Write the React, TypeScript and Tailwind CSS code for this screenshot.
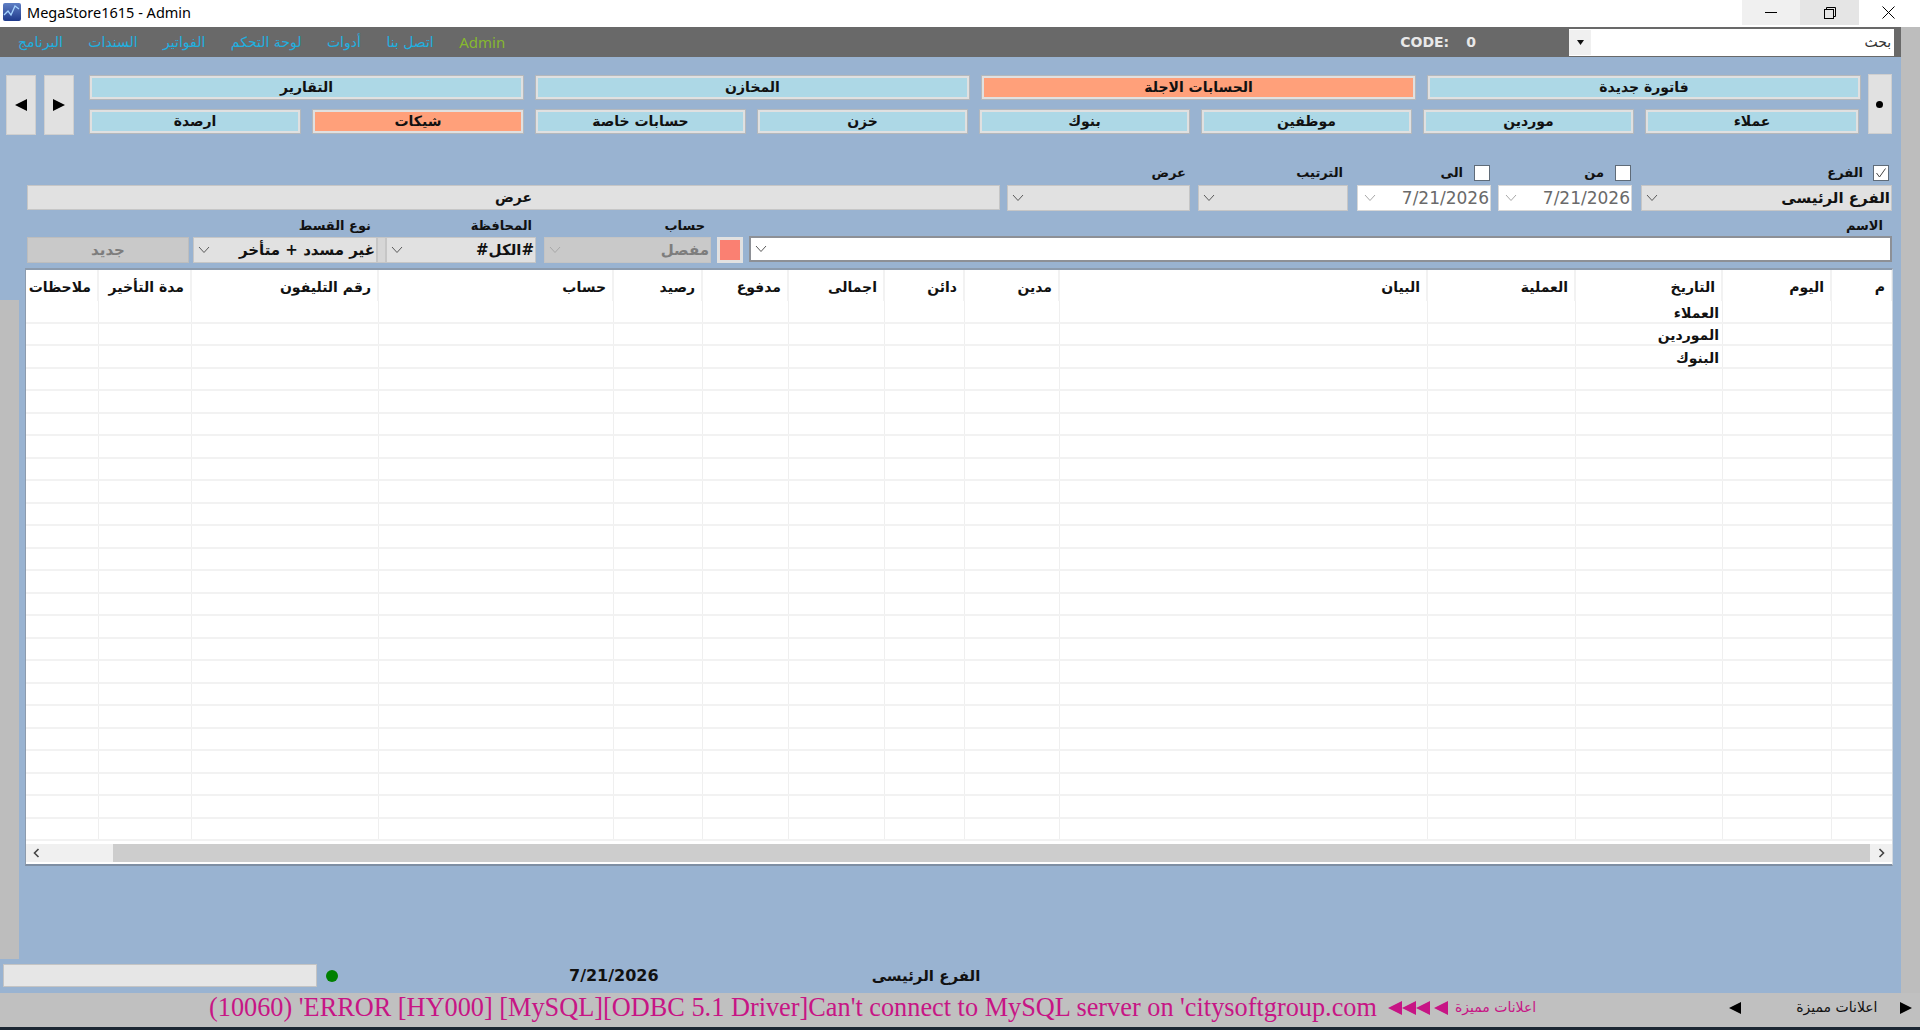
import React from "react";

const AR = "font-['DejaVu_Sans',sans-serif]";

function Chevron({ disabled = false }: { disabled?: boolean }) {
  return (
    <svg width="12" height="8" viewBox="0 0 12 8" className="shrink-0">
      <polyline points="1,1 6,6.5 11,1" fill="none" stroke={disabled ? "#a8a8a8" : "#5a5a5a"} strokeWidth="1" />
    </svg>
  );
}

function Tri({ dir, size = 12, color = "#000" }: { dir: "l" | "r"; size?: number; color?: string }) {
  return (
    <svg width={size} height={size} viewBox="0 0 10 10" className="shrink-0">
      <polygon points={dir === "l" ? "0,5 10,0 10,10" : "0,0 10,5 0,10"} fill={color} />
    </svg>
  );
}

function Btn({ w, label, active = false }: { w: string; label: string; active?: boolean }) {
  return (
    <button className={`${w} h-[25px] shrink-0 border border-[#b4b8bc] p-0 flex`}>
      <span
        dir="rtl"
        className={`flex-1 border-2 border-[#e0e0e0] flex items-center justify-center text-[14px] font-bold text-[#111] ${AR} ${
          active ? "bg-[#ffa07a]" : "bg-[#add8e6]"
        }`}
      >
        {label}
      </span>
    </button>
  );
}

function Combo({
  w,
  text,
  white = false,
  disabled = false,
  thick = false,
}: {
  w: string;
  text?: string;
  white?: boolean;
  disabled?: boolean;
  thick?: boolean;
}) {
  return (
    <div
      className={`${w} h-[26px] shrink-0 flex items-center justify-between pl-[4px] pr-[1px] text-[15px] font-bold ${AR} border ${
        thick
          ? "border-[#8d9096] border-2 bg-white"
          : white
          ? "border-[#d4d4d4] bg-white"
          : disabled
          ? "border-[#c4c4c4] bg-[#c9c9c9] text-[#7d7d7d]"
          : "border-[#c6c6c6] bg-[#e1e1e1] text-[#111]"
      }`}
    >
      <Chevron disabled={disabled} />
      <span dir="rtl" className="pt-[1px]">{text}</span>
    </div>
  );
}

function DateBox({ w }: { w: string }) {
  return (
    <div className={`${w} h-[26px] shrink-0 flex items-center justify-between pl-[6px] pr-[1px] bg-white border border-[#d8d8d8] text-[17px] text-[#6a6a6a] font-['DejaVu_Sans',sans-serif]`}>
      <Chevron disabled />
      <span className="pt-[2px]">7/21/2026</span>
    </div>
  );
}

function Check({ checked = false }: { checked?: boolean }) {
  return (
    <div className="w-[16px] h-[16px] shrink-0 bg-white border border-[#5f6b78] flex items-center justify-center">
      {checked && (
        <svg width="12" height="12" viewBox="0 0 12 12">
          <polyline points="1.5,6 4.5,10 10.5,1.5" fill="none" stroke="#444" strokeWidth="1" />
        </svg>
      )}
    </div>
  );
}

const cols = [
  { w: "w-[73px]", t: "ملاحظات" },
  { w: "w-[93px]", t: "مدة التأخير" },
  { w: "w-[187px]", t: "رقم التليفون" },
  { w: "w-[235px]", t: "حساب" },
  { w: "w-[89px]", t: "رصيد" },
  { w: "w-[86px]", t: "مدفوع" },
  { w: "w-[96px]", t: "اجمالى" },
  { w: "w-[80px]", t: "دائن" },
  { w: "w-[95px]", t: "مدين" },
  { w: "w-[368px]", t: "البيان" },
  { w: "w-[148px]", t: "العملية" },
  { w: "w-[147px]", t: "التاريخ" },
  { w: "w-[109px]", t: "اليوم" },
  { w: "w-[61px]", t: "م" },
];

const rowTexts: Record<number, string> = { 0: "العملاء", 1: "الموردين", 2: "البنوك" };
const rows = Array.from({ length: 24 }, (_, i) => i);

function Table() {
  return (
    <div className="w-[1868px] h-[598px] shrink-0 bg-white border-t-2 border-l border-r border-b-2 border-t-[#8c9bad] border-l-[#8c9bad] border-r-[#d0d8e0] border-b-[#7f8fa3] flex flex-col overflow-hidden">
      <div className="h-[31px] shrink-0 flex">
        {cols.map((c) => (
          <div
            key={c.t}
            className={`${c.w} shrink-0 border-r-2 border-[#f2f2f2] flex items-center justify-end pr-[6px] pt-[4px] text-[14px] font-bold text-[#111] ${AR}`}
          >
            <span dir="rtl">{c.t}</span>
          </div>
        ))}
      </div>
      <div className="flex-1 overflow-hidden">
        {rows.map((r) => (
          <div key={r} className="h-[22.5px] flex border-b-2 border-[#f2f2f2]">
            {cols.map((c, i) => (
              <div
                key={c.t}
                className={`${c.w} shrink-0 border-r border-[#efefef] flex items-center justify-end pr-[3px] pt-[4px] text-[14px] font-bold text-[#111] ${AR}`}
              >
                {i === 11 && rowTexts[r] ? <span dir="rtl">{rowTexts[r]}</span> : null}
              </div>
            ))}
          </div>
        ))}
      </div>
      <div className="h-[23px] shrink-0 bg-white pt-[3px] pb-[2px] flex">
        <div className="w-[87px] shrink-0 bg-[#f0f0f0] flex items-center pl-[7px]">
          <svg width="7" height="10" viewBox="0 0 7 10">
            <polyline points="5.5,1 1.5,5 5.5,9" fill="none" stroke="#444" strokeWidth="1.6" />
          </svg>
        </div>
        <div className="flex-1 bg-[#cdcdcd]" />
        <div className="w-[22px] shrink-0 bg-[#f0f0f0] flex items-center justify-center">
          <svg width="7" height="10" viewBox="0 0 7 10">
            <polyline points="1.5,1 5.5,5 1.5,9" fill="none" stroke="#444" strokeWidth="1.6" />
          </svg>
        </div>
      </div>
    </div>
  );
}

export default function App() {
  return (
    <div className="w-[1920px] h-[1030px] flex flex-col overflow-hidden bg-[#99b3d1]">
      {/* Title bar */}
      <div className="h-[27px] shrink-0 bg-white flex items-start">
        <div className="w-[18px] h-[18px] ml-[3px] mt-[3px] shrink-0">
          <svg width="18" height="18" viewBox="0 0 18 18">
            <defs>
              <linearGradient id="lg" x1="0" y1="0" x2="0" y2="1">
                <stop offset="0" stopColor="#5f7fc4" />
                <stop offset="1" stopColor="#1f3a8c" />
              </linearGradient>
            </defs>
            <rect x="0" y="0" width="18" height="18" rx="2" fill="url(#lg)" />
            <polyline points="1,12 5,8 8,12 12,3 16,6" fill="none" stroke="#a6d4ff" strokeWidth="1.3" />
          </svg>
        </div>
        <span className="ml-[6px] mt-[2px] text-[14.5px] leading-[20px] text-black font-['Noto_Sans',sans-serif]">MegaStore1615 - Admin</span>
        <div className="ml-auto flex">
          <div className="w-[58px] h-[25px] bg-[#f0f0f0] flex items-center justify-center">
            <div className="w-[12px] h-[1px] bg-black" />
          </div>
          <div className="w-[59px] h-[25px] bg-[#e5e5e5] flex items-center justify-center">
            <svg width="12" height="12" viewBox="0 0 12 12">
              <rect x="0.5" y="2.5" width="9" height="9" fill="none" stroke="#000" />
              <polyline points="2.5,2.5 2.5,0.5 11.5,0.5 11.5,9.5 9.5,9.5" fill="none" stroke="#000" />
            </svg>
          </div>
          <div className="w-[61px] h-[25px] bg-white flex items-center justify-center pr-[3px]">
            <svg width="13" height="13" viewBox="0 0 13 13">
              <path d="M0.5 0.5 L12.5 12.5 M12.5 0.5 L0.5 12.5" stroke="#000" strokeWidth="1" fill="none" />
            </svg>
          </div>
        </div>
      </div>

      <div className="h-[966px] shrink-0 flex">
        <div className="w-[1901px] shrink-0 flex flex-col">
          {/* Menu */}
          <div className="h-[30px] shrink-0 bg-[#696969] flex items-center">
            <div className={`ml-[18px] flex items-center gap-[25.5px] text-[14px] text-[#20b0e0] ${AR}`}>
              {["البرنامج", "السندات", "الفواتير", "لوحة التحكم", "أدوات", "اتصل بنا"].map((m) => (
                <span key={m} dir="rtl">{m}</span>
              ))}
              <span className="text-[#86b82f] font-['Noto_Sans',sans-serif] text-[15px]">Admin</span>
            </div>
            <div className="ml-[895px] w-[47px] text-[14px] font-bold text-[#e8e8e8] font-['DejaVu_Sans',sans-serif] whitespace-nowrap">CODE:</div>
            <div className="ml-[19px] w-[103px] text-[14px] font-bold text-[#e8e8e8] font-['DejaVu_Sans',sans-serif]">0</div>
            <div className="w-[325px] h-[27px] bg-white flex items-center justify-between pr-[3px]">
              <div className="w-[22px] h-[25px] bg-[#f0f0f0] flex items-center justify-center">
                <svg width="7" height="5" viewBox="0 0 7 5"><polygon points="0,0 7,0 3.5,5" fill="#111" /></svg>
              </div>
              <span dir="rtl" className={`text-[14px] text-[#333] ${AR}`}>بحث</span>
            </div>
          </div>

          {/* Nav + action buttons */}
          <div className="h-[78px] shrink-0 pt-[18px] pl-[6px] flex">
            <button className="w-[30px] h-[60px] bg-[#e1e1e1] border border-[#cfcfcf] flex items-center justify-center"><Tri dir="l" /></button>
            <button className="w-[30px] h-[60px] ml-[8px] bg-[#e1e1e1] border border-[#cfcfcf] flex items-center justify-center"><Tri dir="r" /></button>
            <div className="ml-[15px] w-[1773px] flex flex-col gap-[9px]">
              <div className="flex gap-[11px]">
                <Btn w="w-[435px]" label="التقارير" />
                <Btn w="w-[435px]" label="المخازن" />
                <Btn w="w-[435px]" label="الحسابات الاجلة" active />
                <Btn w="w-[434px]" label="فاتورة جديدة" />
              </div>
              <div className="flex gap-[11px]">
                <Btn w="w-[212px]" label="ارصدة" />
                <Btn w="w-[212px]" label="شيكات" active />
                <Btn w="w-[211px]" label="حسابات خاصة" />
                <Btn w="w-[211px]" label="خزن" />
                <Btn w="w-[211px]" label="بنوك" />
                <Btn w="w-[211px]" label="موظفين" />
                <Btn w="w-[211px]" label="موردين" />
                <Btn w="w-[214px]" label="عملاء" />
              </div>
            </div>
            <button className="ml-[6px] w-[24px] h-[60px] -mt-[1px] pr-[2px] bg-[#e1e1e1] border border-[#cfcfcf] flex items-center justify-center">
              <div className="w-[7px] h-[7px] rounded-full bg-black" />
            </button>
          </div>

          {/* Filter labels row 1 */}
          <div className={`h-[50px] shrink-0 flex items-center pt-[30px] pb-[4px] text-[13px] font-bold text-[#111] ${AR}`}>
            <span dir="rtl" className="ml-[1150px] w-[36px] text-right">عرض</span>
            <span dir="rtl" className="ml-[107px] w-[50px] text-right">الترتيب</span>
            <span dir="rtl" className="ml-[90px] w-[30px] text-right">الى</span>
            <div className="ml-[11px]"><Check /></div>
            <span dir="rtl" className="ml-[84px] w-[30px] text-right">من</span>
            <div className="ml-[11px]"><Check /></div>
            <span dir="rtl" className="ml-[192px] w-[40px] text-right">الفرع</span>
            <div className="ml-[10px]"><Check checked /></div>
          </div>

          {/* Filter row 1 */}
          <div className="h-[26px] shrink-0 flex pl-[27px]">
            <button className={`w-[973px] h-[25px] shrink-0 bg-[#e1e1e1] border border-[#c6c6c6] text-[14px] font-bold text-[#111] ${AR}`}>عرض</button>
            <div className="ml-[7px]"><Combo w="w-[183px]" /></div>
            <div className="ml-[8px]"><Combo w="w-[150px]" /></div>
            <div className="ml-[9px]"><DateBox w="w-[134px]" /></div>
            <div className="ml-[7px]"><DateBox w="w-[134px]" /></div>
            <div className="ml-[9px]"><Combo w="w-[251px]" text="الفرع الرئيسى" /></div>
          </div>

          {/* Filter labels row 2 */}
          <div className={`h-[25px] shrink-0 flex items-end pb-[1px] text-[13px] font-bold text-[#111] ${AR}`}>
            <span dir="rtl" className="ml-[291px] w-[80px] text-right whitespace-nowrap">نوع القسط</span>
            <span dir="rtl" className="ml-[91px] w-[70px] text-right">المحافظة</span>
            <span dir="rtl" className="ml-[123px] w-[50px] text-right">حساب</span>
            <span dir="rtl" className="ml-[1138px] w-[40px] text-right">الاسم</span>
          </div>

          {/* Filter row 2 */}
          <div className="h-[27px] shrink-0 flex items-end pl-[27px]">
            <button className={`w-[162px] h-[26px] shrink-0 bg-[#c9c9c9] border border-[#bdbdbd] text-[15px] font-bold text-[#7d7d7d] ${AR}`}>جديد</button>
            <div className="ml-[4px]"><Combo w="w-[184px]" text="غير مسدد + متأخر" /></div>
            <div className="w-[9px] h-[26px] shrink-0 bg-[#d6d6d6] border border-[#c6c6c6]" />
            <Combo w="w-[150px]" text="#الكل#" />
            <div className="ml-[8px]"><Combo w="w-[167px]" text="مفصل" disabled /></div>
            <div className="ml-[6px] w-[26px] h-[26px] shrink-0 bg-[#fa8072] border-[3px] border-[#e1e1e1]" />
            <div className="ml-[6px] mb-[1px]"><Combo w="w-[1143px]" thick /></div>
          </div>

          {/* Table with left strip */}
          <div className="flex-1 min-h-0 flex pt-[5px]">
            <div className="w-[25px] shrink-0 flex flex-col pt-[32px]">
              <div className="w-[19px] flex-1 bg-[#bdbdbd]" />
            </div>
            <Table />
          </div>

          {/* Status row */}
          <div className="h-[34px] shrink-0 flex pl-[3px] pt-[5px]">
            <div className="w-[314px] h-[23px] bg-[#e6e6e6] border border-[#c4c4c4]" />
            <div className="ml-[9px] mt-[6px] w-[12px] h-[12px] rounded-full bg-[#008000]" />
            <span className="ml-[231px] text-[16px] leading-[24px] font-bold text-[#111] font-['DejaVu_Sans',sans-serif]">7/21/2026</span>
            <span dir="rtl" className={`ml-[213px] text-[15px] leading-[24px] font-bold text-[#111] ${AR}`}>الفرع الرئيسى</span>
          </div>
        </div>
        <div className="w-[19px] shrink-0 bg-[#bdbdbd]" />
      </div>

      {/* Ticker */}
      <div className="h-[34px] shrink-0 bg-[#c0c0c0] flex items-center pl-[209px] pb-[5px] whitespace-nowrap">
        <span className="text-[26.3px] text-[#c71585] font-['Liberation_Serif',serif]">(10060) 'ERROR [HY000] [MySQL][ODBC 5.1 Driver]Can't connect to MySQL server on 'citysoftgroup.com</span>
        <div className="ml-[11px] flex items-center">
          <Tri dir="l" size={14} color="#c71585" />
          <Tri dir="l" size={14} color="#c71585" />
          <Tri dir="l" size={14} color="#c71585" />
          <div className="ml-[4px]"><Tri dir="l" size={14} color="#c71585" /></div>
        </div>
        <span dir="rtl" className={`ml-[7px] text-[14px] text-[#c71585] ${AR}`}>اعلانات مميزة</span>
        <div className="ml-[193px]"><Tri dir="l" size={12} /></div>
        <span dir="rtl" className={`ml-[55px] text-[14px] text-[#111] ${AR}`}>اعلانات مميزة</span>
        <div className="ml-[23px]"><Tri dir="r" size={12} /></div>
      </div>
      <div className="h-[3px] shrink-0 bg-[#1c2733]" />
    </div>
  );
}
